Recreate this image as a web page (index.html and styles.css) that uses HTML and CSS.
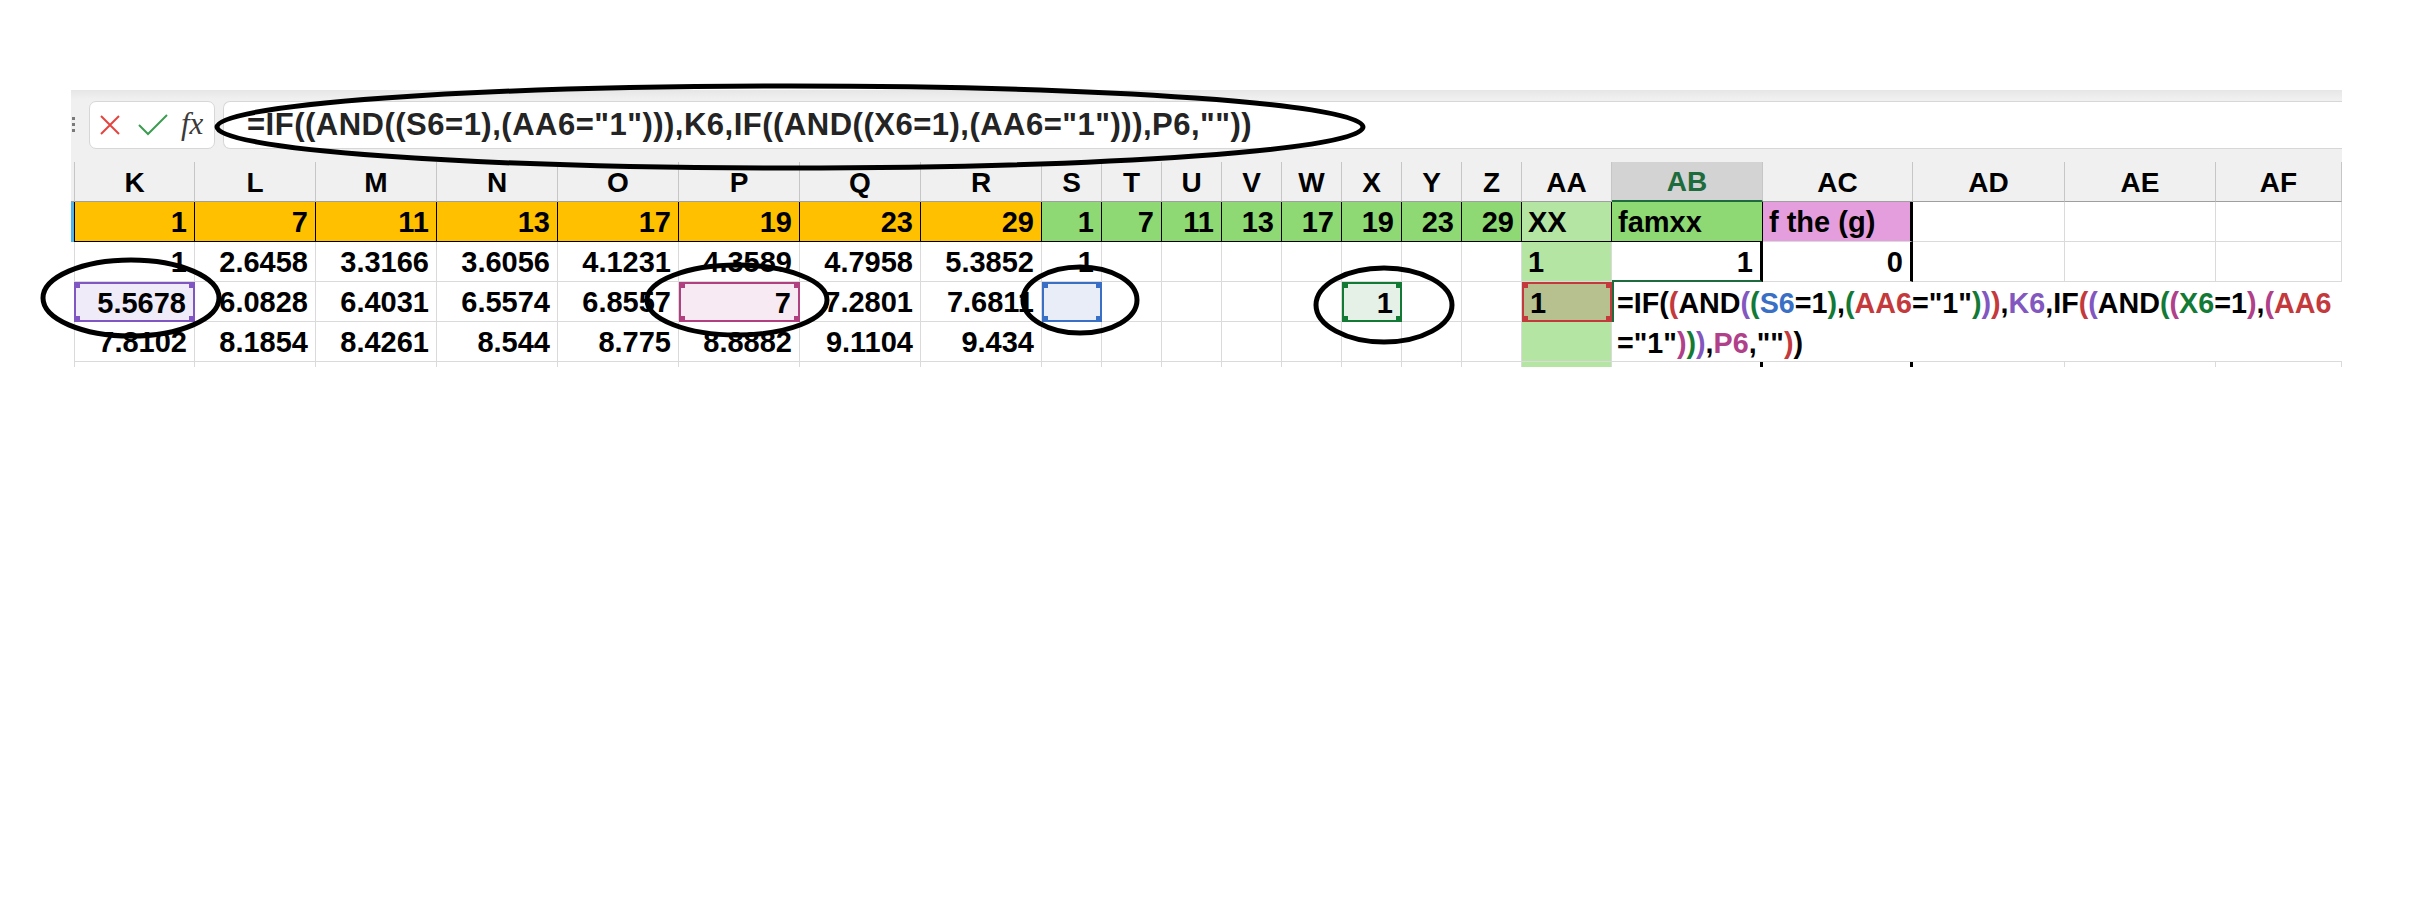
FILE: index.html
```html
<!DOCTYPE html>
<html>
<head>
<meta charset="utf-8">
<title>Sheet</title>
<link rel="stylesheet" href="styles.css">
</head>
<body>
<div class="app">
  <div class="fbar">
    <div class="grip"></div>
    <div class="fbtns">
      <svg class="ic-x" viewBox="0 0 22 22"><path d="M2 2 L20 20 M20 2 L2 20" fill="none" stroke="#e5443e" stroke-width="2"/></svg>
      <svg class="ic-ok" viewBox="0 0 30 22"><path d="M1 11 L10 20 L29 1" fill="none" stroke="#3d9c52" stroke-width="2"/></svg>
      <span class="fx">fx</span>
    </div>
    <div class="finput">=IF((AND((S6=1),(AA6="1"))),K6,IF((AND((X6=1),(AA6="1"))),P6,""))</div>
  </div>

  <div class="sheet">
    <!-- header -->
    <div class="c h gut"></div>
    <div class="c h k">K</div><div class="c h">L</div><div class="c h">M</div><div class="c h">N</div>
    <div class="c h">O</div><div class="c h">P</div><div class="c h">Q</div><div class="c h">R</div>
    <div class="c h">S</div><div class="c h">T</div><div class="c h">U</div><div class="c h">V</div>
    <div class="c h">W</div><div class="c h">X</div><div class="c h">Y</div><div class="c h">Z</div>
    <div class="c h">AA</div><div class="c h hsel">AB</div><div class="c h">AC</div>
    <div class="c h">AD</div><div class="c h">AE</div><div class="c h">AF</div>

    <!-- row 1 -->
    <div class="c gut blue"></div>
    <div class="c t or r k">1</div><div class="c t or r">7</div><div class="c t or r">11</div><div class="c t or r">13</div>
    <div class="c t or r">17</div><div class="c t or r">19</div><div class="c t or r">23</div><div class="c t or r">29</div>
    <div class="c t gr r">1</div><div class="c t gr r">7</div><div class="c t gr r">11</div><div class="c t gr r">13</div>
    <div class="c t gr r">17</div><div class="c t gr r">19</div><div class="c t gr r">23</div><div class="c t gr r">29</div>
    <div class="c t lg">XX</div><div class="c t gr">famxx</div><div class="c pk thick">f the (g)</div>
    <div class="c"></div><div class="c"></div><div class="c"></div>

    <!-- row 2 -->
    <div class="c gut"></div>
    <div class="c r k">1</div><div class="c r">2.6458</div><div class="c r">3.3166</div><div class="c r">3.6056</div>
    <div class="c r">4.1231</div><div class="c r">4.3589</div><div class="c r">4.7958</div><div class="c r">5.3852</div>
    <div class="c r">1</div><div class="c"></div><div class="c"></div><div class="c"></div>
    <div class="c"></div><div class="c"></div><div class="c"></div><div class="c"></div>
    <div class="c lg">1</div><div class="c r thick above">1</div><div class="c r thick">0</div>
    <div class="c"></div><div class="c"></div><div class="c"></div>

    <!-- row 3 -->
    <div class="c gut"></div>
    <div class="c r k sel sel-pu">5.5678</div><div class="c r">6.0828</div><div class="c r">6.4031</div><div class="c r">6.5574</div>
    <div class="c r">6.8557</div><div class="c r sel sel-pk">7</div><div class="c r">7.2801</div><div class="c r">7.6811</div>
    <div class="c sel sel-bl"></div><div class="c"></div><div class="c"></div><div class="c"></div>
    <div class="c"></div><div class="c r sel sel-gn">1</div><div class="c"></div><div class="c"></div>
    <div class="c sel sel-rd">1</div>
    <div class="ed">
      <div class="ed-line first">=IF(<span class="pr">(</span>AND<span class="pp">(</span><span class="pg">(</span><span class="pb">S6</span>=1<span class="pg">)</span>,<span class="pg">(</span><span class="pr">AA6</span>="1"<span class="pg">)</span><span class="pp">)</span><span class="pr">)</span>,<span class="pp">K6</span>,IF<span class="pr">(</span><span class="pp">(</span>AND<span class="pg">(</span><span class="pm">(</span><span class="pg">X6</span>=1<span class="pm">)</span>,<span class="pm">(</span><span class="pr">AA6</span></div>
      <div class="ed-line">="1"<span class="pm">)</span><span class="pg">)</span><span class="pp">)</span>,<span class="pm">P6</span>,""<span class="pr">)</span>)</div>
    </div>

    <!-- row 4 -->
    <div class="c gut"></div>
    <div class="c r k">7.8102</div><div class="c r">8.1854</div><div class="c r">8.4261</div><div class="c r">8.544</div>
    <div class="c r">8.775</div><div class="c r">8.8882</div><div class="c r">9.1104</div><div class="c r">9.434</div>
    <div class="c"></div><div class="c"></div><div class="c"></div><div class="c"></div>
    <div class="c"></div><div class="c"></div><div class="c"></div><div class="c"></div>
    <div class="c lg"></div>

    <!-- row 5 stub -->
    <div class="c gut s"></div>
    <div class="c s k"></div><div class="c s"></div><div class="c s"></div><div class="c s"></div>
    <div class="c s"></div><div class="c s"></div><div class="c s"></div><div class="c s"></div>
    <div class="c s"></div><div class="c s"></div><div class="c s"></div><div class="c s"></div>
    <div class="c s"></div><div class="c s"></div><div class="c s"></div><div class="c s"></div>
    <div class="c s lg"></div><div class="c s thick"></div><div class="c s thick"></div>
    <div class="c s"></div><div class="c s"></div><div class="c s"></div>
  </div>

  <svg class="marks" viewBox="0 0 2421 919">
    <g fill="none" stroke="#000" stroke-width="5">
      <ellipse cx="790" cy="127" rx="573" ry="41"/>
      <ellipse cx="131" cy="298" rx="88" ry="38"/>
      <ellipse cx="737" cy="300" rx="90" ry="35"/>
      <ellipse cx="1080" cy="300" rx="57" ry="33"/>
      <ellipse cx="1384" cy="305" rx="68" ry="37"/>
    </g>
  </svg>
</div>
</body>
</html>
```

FILE: styles.css
```css
* { box-sizing: border-box; }
html, body { margin: 0; padding: 0; background: #fff; }

.app {
  position: relative;
  width: 2421px;
  height: 919px;
  padding: 90px 0 0 71px;
  font-family: "Liberation Sans", Arial, sans-serif;
  overflow: hidden;
}

/* formula bar */
.fbar {
  width: 2271px;
  height: 72px;
  background: linear-gradient(#e6e6e6, #f0f0f0 9px);
  display: flex;
  align-items: flex-start;
  padding-top: 11px;
}
.grip {
  width: 3px;
  height: 17px;
  margin: 16px 0 0 1px;
  background: repeating-linear-gradient(#7a7a7a 0 3px, transparent 3px 6px);
}
.fbtns {
  width: 126px;
  height: 48px;
  margin-left: 14px;
  background: #fff;
  border: 1px solid #d7d7d7;
  border-radius: 7px;
  display: flex;
  align-items: center;
  padding-left: 9px;
}
.ic-x { width: 22px; height: 22px; }
.ic-ok { width: 30px; height: 22px; margin-left: 17px; }
.fx {
  font-family: "Liberation Serif", "DejaVu Serif", serif;
  font-style: italic;
  font-size: 31px;
  color: #3a3a3a;
  margin-left: 13px;
  margin-top: -3px;
}
.finput {
  flex: 1;
  height: 48px;
  margin-left: 8px;
  background: #fff;
  border: 1px solid #d7d7d7;
  border-right: none;
  border-radius: 7px 0 0 7px;
  padding-left: 23px;
  font-weight: bold;
  font-size: 31px;
  letter-spacing: 0.5px;
  line-height: 46px;
  color: #242424;
  white-space: nowrap;
  overflow: hidden;
}

/* sheet grid */
.sheet {
  display: grid;
  width: 2271px;
  grid-template-columns: 3px repeat(8, 121px) repeat(8, 60px) 90px 151px 150px 152px 151px 126px;
  grid-template-rows: 40px 40px 40px 40px 40px 5px;
  font-weight: bold;
  font-size: 29px;
  color: #000;
}
.c {
  border-right: 1px solid #dadada;
  border-bottom: 1px solid #dadada;
  display: flex;
  align-items: center;
  padding: 2px 7px 0 6px;
  white-space: nowrap;
  overflow: hidden;
  line-height: 1;
}
.k { border-left: 1px solid #dadada; }
.r { justify-content: flex-end; }

.h {
  background: #f0f0f0;
  border-right-color: #c6c6c6;
  border-bottom: 1px solid #9f9f9f;
  justify-content: center;
  font-size: 28px;
  padding: 2px 0 0;
}
.h.k { border-left-color: #c6c6c6; }
.hsel {
  background: #d3d3d3;
  color: #1e6b3d;
  border-bottom: 2px solid #1e6b3d;
}

.gut { border: none; padding: 0; }
.h.gut { border-bottom: 1px solid #9f9f9f; }
.blue { background: #4fb3e8; }

.t { border-right-color: #000; border-bottom-color: #000; }
.t.k { border-left-color: #000; }
.or { background: #ffc000; }
.gr { background: #8ed973; }
.lg { background: #b4e5a2; }
.pk { background: #e49edd; }
.thick { border-right: 3px solid #000; }
.above { border-bottom: 2px solid #1e6b3d; }
.s { border-bottom: none; }

/* selection boxes */
.sel {
  border: 2px solid var(--sc);
  background:
    linear-gradient(var(--sc), var(--sc)) 0 0 / 6px 6px no-repeat border-box,
    linear-gradient(var(--sc), var(--sc)) 100% 0 / 6px 6px no-repeat border-box,
    linear-gradient(var(--sc), var(--sc)) 0 100% / 6px 6px no-repeat border-box,
    linear-gradient(var(--sc), var(--sc)) 100% 100% / 6px 6px no-repeat border-box,
    var(--sb);
}
.sel-pu { --sc: #7f56c2; --sb: #efebf8; }
.sel-pk { --sc: #b0407f; --sb: #f7eaf2; }
.sel-bl { --sc: #3a6fc6; --sb: #e8edf8; }
.sel-gn { --sc: #137a36; --sb: #e5f0e7; }
.sel-rd { --sc: #c4393c; --sb: #b7c18f; }

/* in-cell editor */
.ed {
  grid-column: 19 / 24;
  grid-row: 4 / 6;
  background: #fff;
  border-bottom: 1px solid #dadada;
  font-size: 28.7px;
}
.ed-line {
  height: 40px;
  line-height: 42px;
  padding-left: 5px;
  white-space: nowrap;
  overflow: hidden;
}
.ed-line.first { box-shadow: inset 2px 0 0 #1e6b3d; }
.pr { color: #c4393c; }
.pp { color: #8257c0; }
.pg { color: #137a36; }
.pb { color: #3a6fc6; }
.pm { color: #b0408a; }

/* hand-drawn annotation ellipses */
.marks {
  position: absolute;
  left: 0;
  top: 0;
  width: 2421px;
  height: 919px;
  pointer-events: none;
}
```
